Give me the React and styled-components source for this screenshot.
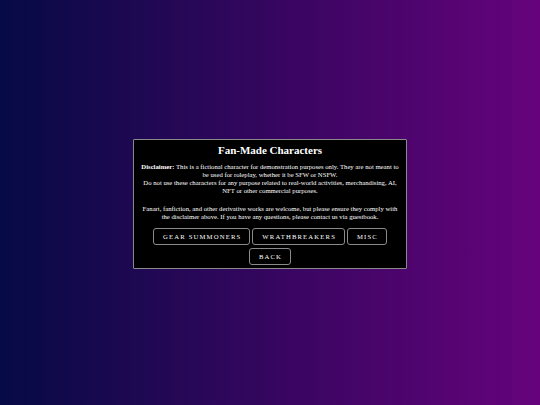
import styled, { createGlobalStyle } from "styled-components";

const Global = createGlobalStyle`
  html, body { margin: 0; padding: 0; }
  body {
    font-family: "Liberation Serif", "Times New Roman", serif;
    background: linear-gradient(to right, #060a45, #35065f 50%, #66037c);
    color: #fff;
  }
`;

const Page = styled.main`
  height: 405px;
  display: flex;
  align-items: center;
  justify-content: center;
`;

const Panel = styled.section`
  box-sizing: border-box;
  width: 274px;
  margin-top: 3px;
  padding: 3px 6px 3px;
  background: #000;
  border: 1px solid #8a8a8a;
  border-radius: 1px;
  text-align: center;
`;

const Title = styled.h2`
  margin: 0 0 6px;
  font-size: 11px;
  font-weight: bold;
  line-height: 14px;
`;

const Text = styled.p`
  margin: 0 0 ${(p) => p.$gap}px;
  font-size: 6.7px;
  line-height: 8px;
`;

const Row = styled.div`
  display: flex;
  justify-content: center;
  gap: 2px;
  margin-bottom: ${(p) => p.$gap || 0}px;
`;

const Button = styled.button`
  font-family: inherit;
  font-size: 6.7px;
  letter-spacing: 1.15px;
  text-transform: uppercase;
  color: #fff;
  background: #000;
  border: 1px solid #8a8a8a;
  border-radius: 3px;
  padding: 0 8px 0 9px;
  height: 17px;
  cursor: pointer;
`;

export default function App() {
  return (
    <>
      <Global />
      <Page>
        <Panel>
          <Title>Fan-Made Characters</Title>
          <Text $gap={10}>
            <b>Disclaimer:</b> This is a fictional character for demonstration purposes only. They are not meant to be used for roleplay, whether it be SFW or NSFW.
            <br />
            Do not use these characters for any purpose related to real-world activities, merchandising, AI, NFT or other commercial purposes.
          </Text>
          <Text $gap={7}>
            Fanart, fanfiction, and other derivative works are welcome, but please ensure they comply with the disclaimer above. If you have any questions, please contact us via guestbook.
          </Text>
          <Row $gap={3}>
            <Button>Gear Summoners</Button>
            <Button>Wrathbreakers</Button>
            <Button>Misc</Button>
          </Row>
          <Row>
            <Button>Back</Button>
          </Row>
        </Panel>
      </Page>
    </>
  );
}
